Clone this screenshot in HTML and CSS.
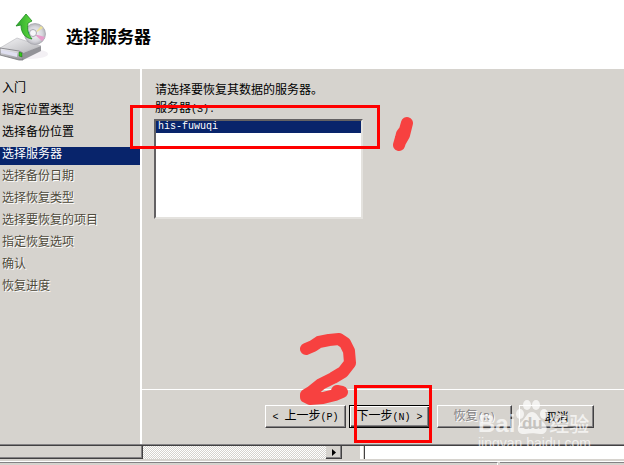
FILE: index.html
```html
<!DOCTYPE html>
<html lang="zh-CN">
<head>
<meta charset="utf-8">
<title>选择服务器</title>
<link rel="stylesheet" href="styles.css">
</head>
<body>
<div class="wizard">
  <header class="header">
    <svg class="logo" viewBox="0 0 54 56" aria-hidden="true">
      <defs>
        <linearGradient id="top" x1="0" y1="0" x2="1" y2="1"><stop offset="0" stop-color="#f4f4f6"/><stop offset="1" stop-color="#b4b4b8"/></linearGradient>
        <linearGradient id="front" x1="0" y1="0" x2="0" y2="1"><stop offset="0" stop-color="#f4f4f8"/><stop offset="1" stop-color="#8d8d92"/></linearGradient>
        <linearGradient id="arrow" x1="0" y1="0" x2="1" y2="0"><stop offset="0" stop-color="#2ba52b"/><stop offset="1" stop-color="#5fd83f"/></linearGradient>
        <radialGradient id="disc"><stop offset="0" stop-color="#f7f7fa"/><stop offset=".7" stop-color="#d6d6dc"/><stop offset="1" stop-color="#b4b4ba"/></radialGradient>
      </defs>
      <ellipse cx="30" cy="46" rx="18" ry="5" fill="#f3f0f4"/>
      <path d="M0 40 L17 30 L41 38 L22 45 L0 41Z" fill="url(#top)" stroke="#b5b5ba" stroke-width=".6"/>
      <path d="M0 40 L19 43 L23 45 L23 52 L19 52 L0 47Z" fill="url(#front)" stroke="#77777c" stroke-width=".8"/>
      <path d="M23 45 L41 38 L41 43 L23 52Z" fill="#939398"/>
      <path d="M1 42 L17 45 L17 49 L1 45Z" fill="#dfdff0"/>
      <path d="M19 44 L22 45 L22 49 L19 48Z" fill="#35c91b" stroke="#156b12" stroke-width=".5"/>
      <circle cx="35" cy="26" r="10.500" fill="url(#disc)" stroke="#a8a8b0" stroke-width=".8"/>
      <path d="M34 26 L25 22 L25 27Z" fill="#37b9dc"/>
      <path d="M34 26 L45 29 L42 33Z" fill="#e79bcb"/>
      <path d="M34 26 L41 18 L43 20Z" fill="#eee39a"/>
      <circle cx="33" cy="25" r="3.500" fill="#f7f7fa" stroke="#aaaab2"/>
      <path d="M26 6 L32 13 L28 15 C27 22 28 26 32 31 C25 30 21 25 21 17 L16 18 Z" fill="url(#arrow)" stroke="#1c8a20" stroke-width=".8"/>
    </svg>
    <h1 class="title">选择服务器</h1>
  </header>
  <div class="main">
    <nav class="sidebar">
      <ol class="steps">
        <li>入门</li>
        <li>指定位置类型</li>
        <li>选择备份位置</li>
        <li class="current" aria-current="step">选择服务器</li>
        <li class="pending">选择备份日期</li>
        <li class="pending">选择恢复类型</li>
        <li class="pending">选择要恢复的项目</li>
        <li class="pending">指定恢复选项</li>
        <li class="pending">确认</li>
        <li class="pending">恢复进度</li>
      </ol>
    </nav>
    <main class="content">
      <section class="form">
        <p class="prompt">请选择要恢复其数据的服务器。</p>
        <label class="label" for="server">服务器<span class="latin">(S):</span></label>
        <select class="list" id="server" size="7">
          <option selected>his-fuwuqi</option>
        </select>
        <svg class="mark mark-box-one" viewBox="0 0 250 44" aria-hidden="true"><rect x="1.500" y="1.500" width="247" height="41"/></svg>
        <svg class="mark mark-one" viewBox="0 0 24 38" aria-hidden="true"><path class="stroke" d="M15 8 L13 15 L10 19 L9 23 L7 30 L8 27 L12 20Z"/></svg>
      </section>
      <footer class="actions">
        <button class="button wide" type="button"><span class="latin">&lt; </span>上一步<span class="latin">(P)</span></button>
        <button class="button wide default" type="button">下一步<span class="latin">(N) &gt;</span></button>
        <button class="button restore" type="button" disabled>恢复<span class="latin">(R)</span></button>
        <button class="button" type="button">取消</button>
        <svg class="mark mark-two" viewBox="0 0 60 76" aria-hidden="true"><path class="stroke" d="M7 20 L14 17 L20 13 L30 11 L40 10 L46 14 L50 22 L51 34 L44 43 L34 49 L22 55 L12 63 L7 66 L7 68 L11 70 L24 69 L36 66 L43 63 L38 62"/></svg>
        <svg class="mark mark-box-two" viewBox="0 0 78 58" aria-hidden="true"><rect x="1.500" y="1.500" width="75" height="55"/></svg>
        <div class="watermark">
          <div class="brand">
            <span>Bai</span>
            <span class="paw">
              <svg viewBox="0 0 34 36" aria-hidden="true"><ellipse cx="5" cy="15" rx="4" ry="5"/><ellipse cx="12" cy="6" rx="4" ry="5"/><ellipse cx="21" cy="6" rx="4" ry="5"/><ellipse cx="29" cy="15" rx="4" ry="5"/><path d="M17 13 C22 13 23 19 28 23 C35 29 31 36 25 35 C19 34 15 34 10 35 C3 36 0 29 6 23 C11 19 12 13 17 13Z"/></svg>
              <span class="du">du</span>
            </span>
            <span class="cn">经验</span>
          </div>
          <div class="site">jingyan.baidu.com</div>
        </div>
      </footer>
    </main>
  </div>
</div>
<div class="behind" aria-hidden="true">
  <div class="pane"></div>
  <div class="track"></div>
  <div class="arrow"><svg viewBox="0 0 4 7"><path d="M0 0 L4 3.500 L0 7Z"/></svg></div>
  <div class="gutter"></div>
  <div class="page"></div>
</div>
<div class="status" aria-hidden="true"><div class="cell"></div><div class="cell"></div></div>
</body>
</html>
```
FILE: styles.css
```css
* { box-sizing: border-box; }

body {
  display: flex;
  flex-direction: column;
  height: 100vh;
  margin: 0;
  overflow: hidden;
  background: #d6d3ce;
  color: #000;
  font: 12px/12px "Noto Sans CJK SC", sans-serif;
}

.latin { font: 10px/12px "Liberation Mono", monospace; white-space: pre; }

.wizard {
  display: flex;
  flex: 1;
  flex-direction: column;
  border-bottom: 1px solid #424142;
  box-shadow: inset 0 -1px #848284;
}

.header {
  display: flex;
  align-items: center;
  gap: 12px;
  padding: 8px 0 5px;
  background: #fff;
}

.logo { width: 54px; height: 56px; }
.title { margin: 0; font-size: 17px; font-weight: 700; line-height: 20px; }

.main { display: flex; flex: 1; padding-bottom: 1px; }
.sidebar { width: 142px; padding-top: 12px; border-right: 2px solid #fff; }

.steps {
  display: flex;
  flex-direction: column;
  gap: 4px;
  margin: 0;
  padding: 0;
  list-style: none;
}

.steps li { padding: 0 2px 6px; }
.steps .current { background: #08246b; color: #fff; }
.steps .pending { color: #4f4b3c; text-shadow: 1px 1px #fff; }

.content { display: flex; flex: 1; flex-direction: column; }

.form {
  position: relative;
  display: flex;
  flex: 1;
  flex-direction: column;
  align-items: flex-start;
  padding: 14px 12px;
}

.prompt { margin: 0 0 6px; padding-left: 1px; }
.label { height: 12px; margin-bottom: 6px; padding-left: 1px; }

.list {
  width: 209px;
  height: 100px;
  margin: 0;
  padding: 0;
  overflow: hidden;
  border: 2px solid;
  border-color: #636163 #e4e2de #e4e2de #636163;
  border-radius: 0;
  outline: 0;
  background: #fff;
  font: 10px/12px "Liberation Mono", monospace;
}

.list option { min-height: 12px; padding: 0 2px; line-height: 12px; }

.list option:checked {
  background: #08246b linear-gradient(#08246b, #08246b);
  color: #fff;
  -webkit-text-fill-color: #fff;
}

.actions {
  position: relative;
  display: flex;
  justify-content: flex-end;
  gap: 7px;
  padding: 15px 30px 16px 0;
  border-top: 1px solid #fff;
}

.button {
  width: 75px;
  height: 23px;
  padding: 0;
  border: 1px solid;
  border-color: #fff #424142 #424142 #fff;
  border-radius: 0;
  box-shadow: inset -1px -1px #848284;
  background: #d6d3ce;
  color: #000;
  font: inherit;
  white-space: nowrap;
}

.wide { width: 81px; }

.default {
  margin-left: -4px;
  border-color: #000;
  box-shadow: inset 1px 1px #fff, inset -1px -1px #424142, inset -2px -2px #848284;
}

.button:disabled { color: #848284; text-shadow: 1px 1px #fff; }

.mark {
  position: absolute;
  fill: none;
  stroke: #f00;
  stroke-width: 3px;
  pointer-events: none;
}

.mark .stroke {
  stroke: #f74140;
  stroke-width: 12px;
  stroke-linecap: round;
  stroke-linejoin: round;
}

.mark-box-one { top: 36px; left: -12px; width: 250px; height: 44px; }
.mark-one { top: 46px; left: 250px; width: 24px; height: 38px; }
.mark-two { right: 265px; bottom: 39px; width: 60px; height: 76px; }
.mark-box-two { right: 192px; bottom: 1px; width: 78px; height: 58px; }

.watermark {
  position: absolute;
  right: 34px;
  bottom: -7px;
  width: 112px;
  color: rgba(255, 255, 255, .7);
  pointer-events: none;
}

.brand {
  display: flex;
  align-items: flex-end;
  font: bold 24px/22px "Liberation Sans", sans-serif;
}

.paw { position: relative; flex: none; width: 34px; height: 36px; }
.paw svg { display: block; fill: rgba(255, 255, 255, .7); }

.du {
  position: absolute;
  right: 0;
  bottom: 3px;
  left: 0;
  color: #c6c3be;
  font-size: 17px;
  line-height: 16px;
  text-align: center;
}

.cn { font: 500 20px/22px "Noto Sans CJK SC", sans-serif; white-space: nowrap; }
.site { font: 14px/16px "Liberation Sans", sans-serif; }

.behind { display: flex; height: 13px; }

.pane {
  width: 143px;
  border: solid #424142;
  border-width: 0 1px 1px 0;
  box-shadow: inset -1px -1px #848284;
}

.track {
  width: 183px;
  background: repeating-conic-gradient(#fff 0 25%, #d6d3ce 0 50%) 0 0 / 2px 2px;
}

.arrow {
  display: flex;
  align-items: center;
  justify-content: center;
  width: 16px;
  border: solid #424142;
  border-width: 0 1px 1px 0;
  box-shadow: inset -1px -1px #848284;
}

.arrow svg { width: 4px; height: 7px; }
.gutter { width: 21px; border-right: 3px solid #fff; }
.page { flex: 1; border-left: 1px solid #424142; margin-left: 1px; background: #fff; }

.status {
  display: flex;
  gap: 2px;
  height: 6px;
  padding-top: 3px;
  box-shadow: inset 0 2px #d6d3ce, inset 0 3px #fff;
}

.cell { flex: 1; border-top: 1px solid #848284; }
.cell:first-child { flex: 4; border-right: 1px solid #fff; }
```
